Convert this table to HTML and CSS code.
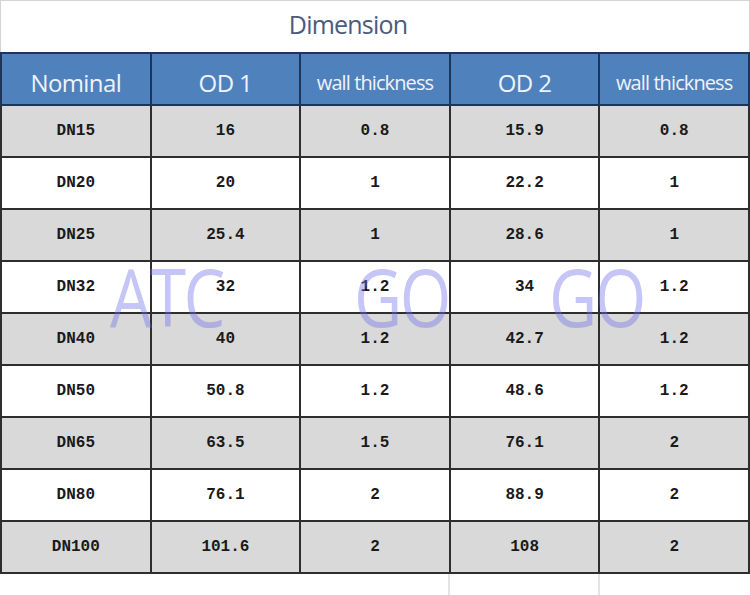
FILE: index.html
```html
<!DOCTYPE html>
<html>
<head>
<meta charset="utf-8">
<link rel="stylesheet" href="styles.css">
</head>
<body>
<div class="page">
  <div class="title">Dimension</div>
  <table class="dim">
    <thead>
      <tr>
        <th class="big">Nominal</th>
        <th class="big">OD 1</th>
        <th>wall thickness</th>
        <th class="big">OD 2</th>
        <th>wall thickness</th>
      </tr>
    </thead>
    <tbody>
      <tr class="g"><td>DN15</td><td>16</td><td>0.8</td><td>15.9</td><td>0.8</td></tr>
      <tr><td>DN20</td><td>20</td><td>1</td><td>22.2</td><td>1</td></tr>
      <tr class="g"><td>DN25</td><td>25.4</td><td>1</td><td>28.6</td><td>1</td></tr>
      <tr><td>DN32</td><td>32</td><td>1.2</td><td>34</td><td>1.2</td></tr>
      <tr class="g"><td>DN40</td><td>40</td><td>1.2</td><td>42.7</td><td>1.2</td></tr>
      <tr><td>DN50</td><td>50.8</td><td>1.2</td><td>48.6</td><td>1.2</td></tr>
      <tr class="g"><td>DN65</td><td>63.5</td><td>1.5</td><td>76.1</td><td>2</td></tr>
      <tr><td>DN80</td><td>76.1</td><td>2</td><td>88.9</td><td>2</td></tr>
      <tr class="g"><td>DN100</td><td>101.6</td><td>2</td><td>108</td><td>2</td></tr>
    </tbody>
  </table>
  <div class="tail">
    <div class="tcell"></div><div class="tcell"></div><div class="tcell"></div><div class="tcell line"></div><div class="tcell line"></div>
  </div>
  <div class="wm"><span class="w1">ATC</span><span class="w2">GO</span><span class="w3">GO</span></div>
</div>
</body>
</html>
```
FILE: styles.css
```css
html, body { margin: 0; padding: 0; background: #fff; }
.page { position: relative; width: 750px; height: 595px; overflow: hidden; }
.title {
  box-sizing: border-box;
  height: 52px;
  border: 1px solid #d4d4d4;
  border-bottom: none;
  padding-right: 54px;
  text-align: center;
  font-family: "Open Sans", sans-serif;
  font-size: 25px;
  line-height: 46px;
  color: #4b5b7a;
  letter-spacing: -0.8px;
}
.dim {
  border-collapse: collapse;
  table-layout: fixed;
  width: 750px;
}
.dim th, .dim td {
  border: 2px solid #2e2e2e;
  padding: 0;
  text-align: center;
  width: 148px;
  box-sizing: border-box;
}
.dim th {
  height: 52px;
  background: #4f81bd;
  border-color: #1d3557;
  color: #eef3fb;
  font-family: "Open Sans", sans-serif;
  font-weight: 400;
  font-size: 20px;
  letter-spacing: -0.9px;
  line-height: 40px;
  padding-top: 8px;
}
.dim th.big { font-size: 24px; letter-spacing: -0.6px; }
.dim td {
  height: 52px;
  font-family: "Liberation Mono", monospace;
  font-weight: 700;
  font-size: 16px;
  color: #1a1a1a;
  background: #fff;
}
.dim tr.g td { background: #d9d9d9; }
.tail { display: flex; height: 23px; }
.tcell { width: 150px; box-sizing: border-box; }
.tcell:nth-child(4) { margin-left: -2px; }
.tcell.line { border-left: 2px solid #e4e4e4; }
.wm {
  position: absolute;
  left: 0; top: 246px;
  width: 750px; height: 100px;
  font-family: "Open Sans", sans-serif;
  font-size: 80px;
  color: rgba(110, 110, 235, 0.4);
  letter-spacing: -3px;
  pointer-events: none;
}
.wm span { position: absolute; top: 0; line-height: 100px; transform: scaleX(0.83); transform-origin: left; }
.w1 { left: 110px; }
.w2 { left: 354px; }
.w3 { left: 549px; }
```
